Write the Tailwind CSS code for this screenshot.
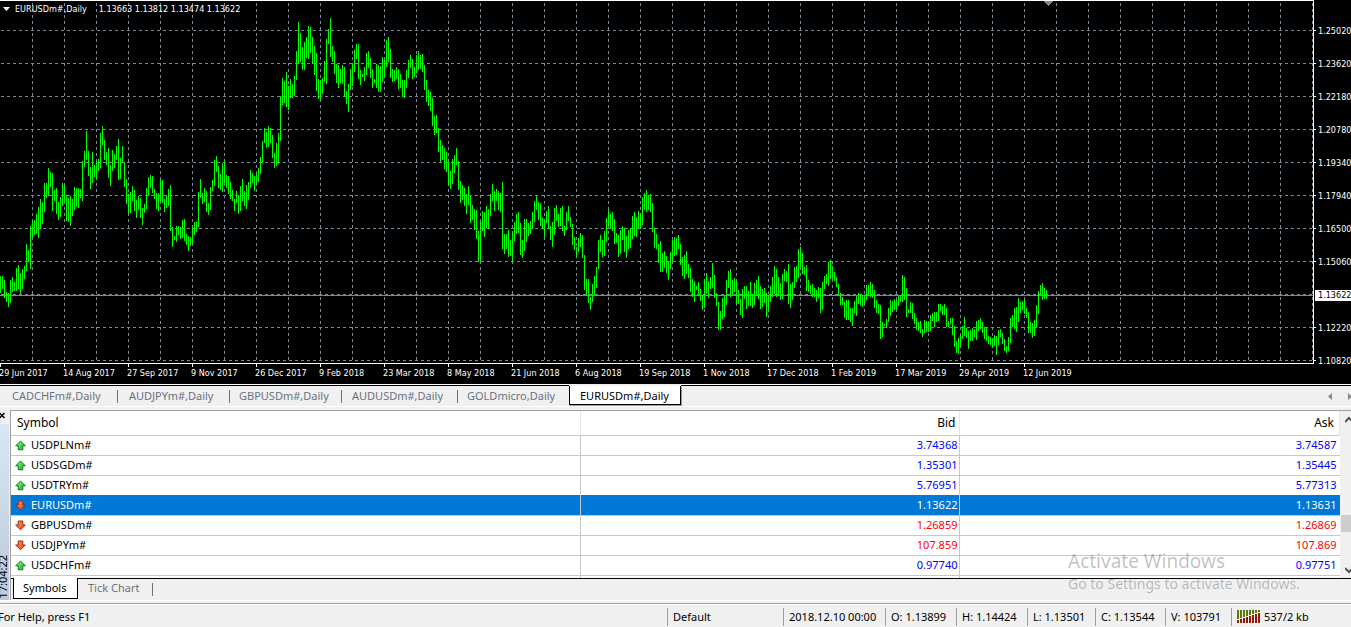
<!DOCTYPE html>
<html lang="en">
<head>
<meta charset="utf-8">
<title>EURUSDm#,Daily</title>
<script src="https://cdn.jsdelivr.net/npm/@tailwindcss/browser@4"></script>
</head>
<body class="relative flex min-h-screen flex-col overflow-x-hidden bg-[#f0f0f0] font-['Noto_Sans','Open_Sans',sans-serif] text-[11px] leading-4 text-black">

<svg class="absolute h-0 w-0" aria-hidden="true">
  <defs>
    <linearGradient id="green" x1="0" y1="0" x2="1" y2="1"><stop offset="0" stop-color="#8cf088"/><stop offset="1" stop-color="#14b428"/></linearGradient>
    <linearGradient id="red" x1="0" y1="0" x2="1" y2="1"><stop offset="0" stop-color="#ff9a6a"/><stop offset="1" stop-color="#e8400c"/></linearGradient>
    <symbol id="up" viewBox="0 0 11 11"><path d="M5.5 1 L10.3 5.8 H7.8 V9.8 H3.2 V5.8 H.7 Z" fill="url(#green)" stroke="#0b7a1c"/></symbol>
    <symbol id="down" viewBox="0 0 11 11"><path d="M5.5 9.8 L10.3 5 H7.8 V1 H3.2 V5 H.7 Z" fill="url(#red)" stroke="#a02808"/></symbol>
  </defs>
</svg>

<main class="flex h-[384px] bg-black font-['DejaVu_Sans_Condensed','DejaVu_Sans',sans-serif] text-[9px] leading-3 text-white">
  <section class="flex min-w-0 flex-1 flex-col">
    <div class="relative h-[364px] overflow-hidden border-t border-r border-b border-white">
      <svg id="plot" class="absolute inset-x-0 -top-px h-[364px] w-full" shape-rendering="crispEdges" fill="none" aria-label="EURUSDm# daily bars">
        <path id="grid" stroke="#778899" stroke-dasharray="3 3"/>
        <path d="M0 295.5H3000" stroke="#778899"/>
        <path id="bars" stroke="#00ff00"/>
        <path d="M1043 1h11l-5.5 5z" fill="#778899"/>
      </svg>
      <h1 class="relative flex items-center pt-[2px] pl-[3px]">
        <svg class="mr-[5px] h-3 w-[7px]" viewBox="0 0 7 12"><path d="M0 4h7L3.500 8z" fill="#fff"/></svg>
        <span class="mr-3">EURUSDm#,Daily</span><span>1.13663 1.13812 1.13474 1.13622</span>
      </h1>
    </div>
    <div id="dates" class="flex overflow-hidden"></div>
  </section>
  <aside id="prices" class="relative flex w-[37px] flex-col overflow-hidden pt-[14px]"></aside>
</main>

<nav class="mt-px flex h-[21px] items-stretch bg-[#f0f0f0] text-gray-500" aria-label="Charts">
  <div class="flex items-center border-t border-black bg-[#f0f0f0] shadow-[0_-1px_#fff]">
    <button class="w-[117px] border-black pl-3 text-left">CADCHFm#,Daily</button><i class="h-[13px] w-px bg-gray-500"></i>
    <button class="w-[111px] pl-[11px] text-left">AUDJPYm#,Daily</button><i class="h-[13px] w-px bg-gray-500"></i>
    <button class="w-[111px] pl-[9px] text-left">GBPUSDm#,Daily</button><i class="h-[13px] w-px bg-gray-500"></i>
    <button class="w-[115px] pl-[10px] text-left">AUDUSDm#,Daily</button><i class="h-[13px] w-px bg-gray-500"></i>
    <button class="w-[111px] pl-[9px] text-left">GOLDmicro,Daily</button>
  </div>
  <button class="mt-px mb-px w-[112px] border-x border-b border-black bg-white pt-px pl-[10px] text-left text-black shadow-[1px_1px_#999]">EURUSDm#,Daily</button>
  <div class="flex flex-1 items-center justify-end gap-4 border-t border-black shadow-[0_-1px_#fff]">
    <button aria-label="Scroll left"><svg class="h-[7px] w-1" viewBox="0 0 4 7"><path d="M4 0v7L0 3.500z" fill="#888"/></svg></button>
    <button aria-label="Scroll right"><svg class="h-[7px] w-[3px]" viewBox="0 0 3 7"><path d="M0 0v7L4 3.500z" fill="#888"/></svg></button>
  </div>
</nav>
<div class="h-1 border-t border-white"></div>

<div class="flex">
  <div class="flex w-[9px] shrink-0 flex-col">
    <button class="h-[14px]" aria-label="Close"><svg class="h-[14px] w-[9px]" viewBox="0 0 9 14"><path d="M-.5 3l5 5M4.500 3l-5 5" stroke="#000" stroke-width="1.500"/></svg></button>
    <div class="flex flex-1 items-end bg-linear-to-b from-[#d9e6f3] to-[#bcc9da]"><span class="-ml-[3px] rotate-180 pt-px text-[11px] leading-3 whitespace-nowrap [writing-mode:vertical-rl]">17:04:22</span></div>
  </div>
  <section class="ml-px min-w-0 flex-1 border-t border-l border-[#a0a0a0]">
    <div class="flex h-[167px] overflow-hidden bg-white">
      <table class="flex-1 table-fixed border-collapse self-start text-right">
        <colgroup><col class="w-[569px]"><col class="w-[379px]"><col></colgroup>
        <thead><tr class="h-6 border-b border-[#c8c8c8]"><th class="border-r border-[#e5e5e5] p-0 pl-[6px] text-left font-normal text-[12px]">Symbol</th><th class="border-r border-[#e5e5e5] p-0 pr-[3px] text-[12px] font-normal">Bid</th><th class="border-r border-[#e5e5e5] p-0 pr-[5px] text-[12px] font-normal">Ask</th></tr></thead>
        <tbody id="quotes"></tbody>
      </table>
      <div class="flex w-[11px] flex-col items-end bg-[#f0f0f0]">
        <svg class="mt-[5px] h-2 w-[6px]" viewBox="0 0 6 8"><path d="M0 6L4 2l4 4" fill="none" stroke="#555" stroke-width="2"/></svg>
        <div class="mt-[91px] h-[17px] w-[10px] bg-[#cdcdcd]"></div>
        <svg class="mt-auto mb-1 h-2 w-[6px]" viewBox="0 0 6 8"><path d="M0 2l4 4 4-4" fill="none" stroke="#555" stroke-width="2"/></svg>
      </div>
    </div>
    <nav class="flex h-[22px] items-start border-t border-black pl-[2px]" aria-label="Market watch">
      <button class="-mt-px h-[21px] w-[65px] border-x border-b border-black bg-white pl-[9px] text-left">Symbols</button>
      <button class="mt-px w-[74px] pl-[10px] text-left text-gray-500">Tick Chart</button>
      <i class="mt-1 h-[13px] w-px bg-gray-500"></i>
    </nav>
  </section>
</div>

<div class="h-[3px] border-t border-white"></div>
<footer class="flex flex-1 items-start border-t border-[#a0a0a0] pt-[4px] shadow-[inset_0_1px_#fff]">
  <div class="min-w-0 flex-1 pt-px whitespace-nowrap"><span class="-ml-[2px]">For Help, press F1</span></div>
  <div class="h-[18px] w-[116px] border-l border-[#a0a0a0] pt-px pl-[5px]">Default</div>
  <div class="h-[18px] w-[102px] border-l border-[#a0a0a0] pt-px pl-[5px]">2018.12.10 00:00</div>
  <div class="h-[18px] w-[71px] border-l border-[#a0a0a0] pt-px pl-[5px]">O: 1.13899</div>
  <div class="h-[18px] w-[71px] border-l border-[#a0a0a0] pt-px pl-[5px]">H: 1.14424</div>
  <div class="h-[18px] w-[68px] border-l border-[#a0a0a0] pt-px pl-[5px]">L: 1.13501</div>
  <div class="h-[18px] w-[70px] border-l border-[#a0a0a0] pt-px pl-[5px]">C: 1.13544</div>
  <div class="h-[18px] w-[66px] border-l border-[#a0a0a0] pt-px pl-[5px]">V: 103791</div>
  <div class="flex h-[18px] w-[120px] gap-[4px] border-l border-[#a0a0a0] pt-px pl-[5px]">
    <svg class="mt-px h-[13px] w-[23px]" viewBox="0 0 23 13" shape-rendering="crispEdges">
      <path d="M1 0v9M4 0v8M7 0v7M10 0v6M13 0v5M16 0v4M19 0v3M22 0v2" stroke="#5c7a0a" stroke-width="2"/>
      <path d="M1 10v3M4 9v4M7 8v5M10 7v6M13 6v7M16 5v8M19 4v9M22 3v10" stroke="#901c08" stroke-width="2"/>
    </svg><span>537/2 kb</span>
  </div>
</footer>

<div class="pointer-events-none absolute top-[549px] right-[46px] w-[237px] font-['Noto_Sans','Open_Sans',sans-serif] whitespace-nowrap text-black/25">
  <p class="text-[19px] leading-6">Activate Windows</p>
  <p class="text-[14px] leading-[22px]">Go to Settings to activate Windows.</p>
</div>

<script>
const bars = `276,293 276,289 280,298 292,302 293,307 280,303 277,292 282,291 268,291 265,289 273,294 269,289 266,279 244,271 250,262 226,269
221,237 220,235 214,234 207,238 199,229 202,224 183,212 183,198 168,196 172,187 173,211 190,201 188,214 202,220 197,217 183,206
185,201 195,221 198,222 196,226 199,216 187,210 188,207 188,208 189,198 161,201 151,167 131,160 151,176 167,189 152,183 165,177
161,179 159,171 133,168 126,145 140,160 152,165 148,178 165,186 150,171 154,168 146,160 139,180 158,179 146,162 162,187 179,204
194,214 192,213 186,201 190,211 200,218 196,210 198,218 208,225 204,213 188,209 177,196 175,188 176,193 189,199 193,209 193,211
180,202 180,203 199,212 195,208 189,206 185,231 227,247 236,240 226,242 226,235 227,239 220,238 219,241 234,245 236,251 237,246
227,244 222,235 222,232 192,227 179,198 193,204 188,202 191,212 203,215 187,210 180,191 160,186 156,172 166,188 174,190 163,192
161,183 175,188 176,194 182,199 190,201 199,211 191,203 195,214 186,211 179,201 191,206 185,209 182,200 170,188 173,183 176,191
174,184 168,182 157,174 141,163 128,143 132,148 126,147 128,143 135,158 153,168 143,166 133,164 96,141 78,105 81,103 72,107
86,110 79,98 84,98 76,96 51,80 22,64 33,62 47,70 42,70 37,58 26,59 27,53 37,64 46,75 53,91 79,99
80,100 78,94 61,82 39,84 29,44 18,57 46,62 51,74 64,83 65,88 69,83 65,84 67,97 91,104 84,112 69,90
63,86 50,72 44,59 44,79 70,85 74,77 67,81 53,75 51,68 58,78 69,88 79,83 64,88 65,92 66,92 57,82
60,77 40,67 37,62 49,78 69,82 70,81 67,79 69,89 74,88 80,97 80,98 70,88 60,78 55,68 59,79 67,77
55,73 51,70 55,69 54,72 65,90 80,102 90,106 92,111 98,126 116,135 115,133 128,152 140,162 145,160 148,169 152,172
161,186 171,189 159,184 155,173 148,165 161,190 181,203 185,200 188,206 194,214 186,205 196,223 205,220 209,230 210,239 231,262
222,261 211,231 212,237 206,228 209,229 194,216 184,201 191,211 189,201 191,210 193,212 182,249 234,254 234,249 230,257 240,256
232,262 222,241 214,234 212,233 223,255 240,258 219,251 219,242 223,236 221,234 212,229 201,222 196,210 202,220 203,226 218,229
220,238 211,223 206,229 226,240 222,247 208,235 205,221 214,227 208,226 206,231 226,236 212,230 206,221 217,227 224,245 237,250
247,257 238,252 233,247 235,258 255,290 279,295 279,303 297,310 284,302 276,295 267,288 240,269 235,252 240,257 231,256 218,242
209,226 214,229 212,231 219,244 233,243 235,257 230,254 226,240 228,252 236,258 230,249 228,248 216,239 212,236 217,237 211,229
213,229 197,225 193,210 190,212 195,210 194,212 203,232 228,248 234,249 244,263 241,272 253,272 251,268 256,273 262,280 252,269
240,261 237,256 238,255 235,249 244,265 257,276 255,279 251,274 264,278 268,292 279,297 281,302 286,290 282,296 289,301 295,310
280,308 273,294 281,298 277,289 263,288 275,298 293,306 302,330 311,330 298,319 295,317 280,305 271,288 269,297 280,295 278,292
281,304 290,304 299,315 289,318 286,299 286,309 291,306 282,306 294,308 283,305 280,295 276,299 286,309 289,307 288,303 293,317
295,311 286,302 277,297 266,294 269,297 277,296 283,300 274,299 269,281 271,282 264,304 284,308 282,300 267,288 266,282 249,278
247,267 253,274 267,275 265,291 280,292 285,294 284,297 288,297 290,302 287,298 288,313 282,310 276,289 274,284 262,286 260,279
266,279 272,281 277,287 284,296 293,305 297,305 302,318 300,320 300,320 308,322 308,326 301,313 296,316 293,304 294,306 295,307
295,304 285,300 285,296 282,297 284,298 290,308 300,313 304,314 305,339 322,337 324,326 319,328 308,322 300,316 301,312 299,310
300,309 296,306 295,302 275,302 277,300 288,317 309,313 302,313 303,319 313,324 318,330 322,331 321,333 329,337 320,333 321,332
322,332 315,331 313,321 312,327 312,322 304,321 304,311 306,315 304,315 308,327 321,327 318,324 318,335 326,347 341,353 338,354
335,346 326,339 317,336 328,338 331,349 330,341 328,341 329,337 321,340 320,331 318,329 322,333 327,339 327,341 336,344 337,345
338,347 335,346 336,355 330,345 329,337 333,344 339,351 346,353 337,351 318,343 315,327 308,329 307,332 298,322 302,313 301,310
299,314 308,318 312,333 322,333 323,338 320,336 305,328 291,314 285,295 283,300 288,299 290,299`.trim().split(/\s+/);
document.getElementById('bars').setAttribute('d', bars.map((b, i) => { const [h, l] = b.split(','); return `M${i * 2 + .5} ${h}V${l}`; }).join(''));

let grid = '';
for (let y = 30; y <= 360; y += 33) grid += `M1 ${y + .5}H3000`;
for (let x = 32; x < 3000; x += 32) grid += `M${x + .5} 3V363`;
document.getElementById('grid').setAttribute('d', grid);

document.getElementById('dates').innerHTML = ['29 Jun 2017', '14 Aug 2017', '27 Sep 2017', '9 Nov 2017', '26 Dec 2017', '9 Feb 2018', '23 Mar 2018', '8 May 2018', '21 Jun 2018', '6 Aug 2018', '19 Sep 2018', '1 Nov 2018', '17 Dec 2018', '1 Feb 2019', '17 Mar 2019', '29 Apr 2019', '12 Jun 2019']
  .map(d => `<div class="w-16 shrink-0 whitespace-nowrap"><i class="block h-[3px] w-px bg-white"></i><span class="-ml-px block">${d}</span></div>`).join('');

document.getElementById('prices').innerHTML = ['1.25020', '1.23620', '1.22180', '1.20780', '1.19340', '1.17940', '1.16500', '1.15060', '', '1.12220', '1.10820']
  .map(p => p
    ? `<div class="flex h-[33px] shrink-0 items-center gap-[2px]"><i class="h-px w-[2px] shrink-0 bg-white"></i>${p}</div>`
    : `<div class="flex h-[33px] shrink-0 items-center pt-px"><span class="ml-px w-full bg-white pl-[3px] leading-[11px] text-black">1.13622</span></div>`).join('');

document.getElementById('quotes').innerHTML = [
  ['up', 'USDPLNm#', '3.74368', '3.74587'], ['up', 'USDSGDm#', '1.35301', '1.35445'], ['last', 'USDTRYm#', '5.76951', '5.77313'],
  ['sel', 'EURUSDm#', '1.13622', '1.13631'], ['down', 'GBPUSDm#', '1.26859', '1.26869'], ['down', 'USDJPYm#', '107.859', '107.869'],
  ['up', 'USDCHFm#', '0.97740', '0.97751'], ['', '', '', '']
].map(([k, s, b, a]) => {
  const row = k === 'sel' ? 'bg-[#0078d7] text-white' : k === 'down' ? 'text-[#ff0000]' : 'text-[#0000ff]';
  const line = k === 'last' ? 'border-b-[#0078d7]' : 'border-b-[#c8c8c8]';
  const name = k === 'sel' ? 'text-white' : 'text-black';
  const icon = k ? `<svg class="h-[11px] w-[11px]"><use href="#${k === 'up' || k === 'last' ? 'up' : 'down'}"/></svg>` : '';
  return `<tr class="h-5 border-b ${line} ${row}"><td class="border-r border-r-[#c8c8c8] p-0 pl-1 ${name}"><span class="flex items-center gap-[5px]">${icon}${s}</span></td><td class="border-r border-r-[#c8c8c8] p-0 pr-px">${b}</td><td class="p-0 pr-[3px]">${a}</td></tr>`;
}).join('');
</script>
</body>
</html>
